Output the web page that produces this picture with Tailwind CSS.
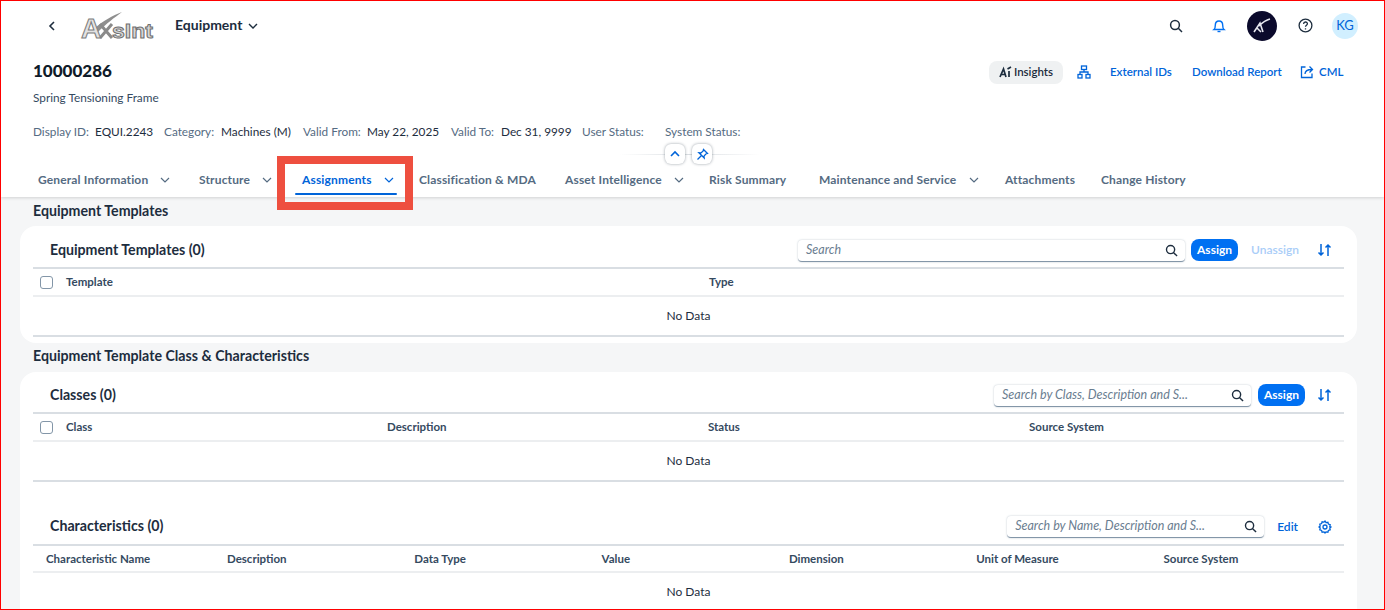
<!DOCTYPE html>
<html lang="en">
<head>
  <meta charset="UTF-8">
  <title>Equipment</title>
  <script src="https://cdn.jsdelivr.net/npm/@tailwindcss/browser@4"></script>
</head>
<body class="bg-[#f5f6f7] font-['Lato',sans-serif] text-[#1d2d3e]">
  <div class="relative w-[1385px] h-[610px] overflow-hidden border border-[#ff0000]">

    <!-- Header -->
    <header class="bg-white h-[196px] shadow-[0_1px_3px_rgba(0,0,0,0.15)] flex flex-col relative">
      <div class="h-[49px] flex items-center pl-[46px] pr-[26px]">
        <svg class="w-[10px] h-[12px] mt-px" viewBox="0 0 10 12" fill="none" stroke="#1d2d3e" stroke-width="1.6"><path d="M7 2 3 6l4 4"/></svg>
        <svg class="ml-[23px] w-[74px] h-[30px] overflow-visible" viewBox="0 0 74 30">
          <path d="M14 18C24 9 32 5 42 1 34 7 27 12 18 21" fill="#8f8f8f"/>
          <path d="M20 13 32 27M32 13 20 27" fill="none" stroke="#8a8a8a" stroke-width="3"/>
          <text x="1" y="27" font-family="Liberation Sans" font-weight="700" font-size="28" fill="#e2e2e2" stroke="#7c7c7c" stroke-width="1">A</text>
          <text x="32" y="27" font-family="Liberation Sans" font-weight="700" font-size="21" textLength="41" lengthAdjust="spacingAndGlyphs" fill="#d6d6d6" stroke="#707070" stroke-width="1">sInt</text>
        </svg>
        <span class="ml-[21px] mt-[-2px] text-[14px] font-bold">Equipment</span>
        <svg class="ml-[5px] w-[12px] h-[12px]" viewBox="0 0 12 12" fill="none" stroke="#1d2d3e" stroke-width="1.4"><path d="M2 4l4 4 4-4"/></svg>
        <div class="ml-auto flex items-center">
          <svg class="w-[14px] h-[14px]" viewBox="0 0 14 14" fill="none" stroke="#1d2d3e" stroke-width="1.5"><circle cx="6" cy="6" r="4.4"/><path d="M9.300 9.300 13 13"/></svg>
          <svg class="ml-[29px] w-[14px] h-[14px]" viewBox="0 0 14 14" fill="none" stroke="#0070f2" stroke-width="1.4"><path d="M2 10.500c1.200-1 1.300-2 1.300-4.200C3.300 3.500 5 2 7 2s3.700 1.500 3.700 4.300c0 2.200.1 3.200 1.300 4.200z"/><path d="M5.500 12.500h3"/></svg>
          <div class="ml-[21px] w-[30px] h-[30px] rounded-full bg-[#0b0a2c] flex items-center justify-center">
            <svg class="w-[20px] h-[18px]" viewBox="0 0 20 18" fill="none" stroke="#e8e8f0" stroke-width="1.600"><path d="M2 15 8 6l3 9M5 11l4 4M7 9c3-3 7-6 11-7"/></svg>
          </div>
          <svg class="ml-[21px] w-[15px] h-[15px]" viewBox="0 0 15 15" fill="none" stroke="#1d2d3e" stroke-width="1.300"><circle cx="7.500" cy="7.500" r="6.400"/><path d="M5.600 5.900c0-2.500 3.800-2.500 3.800-.2 0 1.600-1.900 1.500-1.900 3.100"/><path d="M7.500 10.300v1.200"/></svg>
          <div class="ml-[19px] w-[26px] h-[26px] rounded-full bg-[#d1efff] text-[#0064d9] text-[13px] flex items-center justify-center">KG</div>
        </div>
      </div>

      <div class="flex items-center h-[44px] pl-[32px] pr-[41px]">
        <h1 class="text-[17px] mt-[-3px] leading-none font-black text-[#0f1b29]">10000286</h1>
        <div class="ml-auto flex items-center whitespace-nowrap text-[11.500px] font-semibold text-[#0064d9]">
          <div class="w-[74px] h-[23px] rounded-lg bg-[#eff1f2] flex items-center justify-center gap-[2px] text-[#1d2d3e]">
            <svg class="w-[13px] h-[12px]" viewBox="0 0 13 12" fill="none" stroke="#1d2d3e" stroke-width="1.700"><path d="M1 11 4.500 3 7 11M2.500 8.500h3.500M10 11V5M8.500 3 12 1"/></svg>
            <span>Insights</span>
          </div>
          <svg class="ml-[14px] w-[14px] h-[14px]" viewBox="0 0 14 14" fill="none" stroke="#0064d9" stroke-width="1.300"><rect x="4.500" y="1" width="5" height="3.500"/><rect x="1" y="9.500" width="4" height="3.500"/><rect x="9" y="9.500" width="4" height="3.500"/><path d="M7 4.500V7M3 9.500V7h8v2.500"/></svg>
          <span class="ml-[19px] w-[62px]">External IDs</span>
          <span class="ml-[20px] w-[89px]">Download Report</span>
          <svg class="ml-[19px] w-[14px] h-[14px]" viewBox="0 0 14 14" fill="none" stroke="#0064d9" stroke-width="1.300"><path d="M5.500 2H1.500v10.500h10.500V8.500"/><path d="M5 9c0-3 2-4.500 7-4.500M9.500 1.500l3 3-3 3"/></svg>
          <span class="ml-[5px] w-[24px]">CML</span>
        </div>
      </div>

      <p class="pl-[32px] mt-[-4px] text-[11.800px] leading-[16px] text-[#354a5f]">Spring Tensioning Frame</p>

      <div class="pl-[32px] mt-[18px] h-[16px] flex items-center whitespace-nowrap text-[11.800px] text-[#556b82]">
        <span class="w-[62px]">Display ID:</span><span class="w-[69px] text-[#1d2d3e]">EQUI.2243</span>
        <span class="w-[57px]">Category:</span><span class="w-[82px] text-[#1d2d3e]">Machines (M)</span>
        <span class="w-[64px]">Valid From:</span><span class="w-[84px] text-[#1d2d3e]">May 22, 2025</span>
        <span class="w-[50px]">Valid To:</span><span class="w-[81px] text-[#1d2d3e]">Dec 31, 9999</span>
        <span class="w-[83px]">User Status:</span>
        <span>System Status:</span>
      </div>

      <!-- Collapse and pin buttons -->
      <div class="absolute left-[619px] top-[143px] w-[140px] h-[20px] flex items-center justify-center gap-[7px] pr-[3px]">
        <div class="absolute left-0 right-0 top-[10px] h-px bg-gradient-to-r from-transparent via-[#d9dde1] to-transparent"></div>
        <div class="relative w-[20px] h-[20px] rounded-md bg-white shadow-[0_0_3px_rgba(29,45,62,0.45)] flex items-center justify-center">
          <svg class="w-[12px] h-[12px]" viewBox="0 0 12 12" fill="none" stroke="#0064d9" stroke-width="1.600"><path d="M2 8l4-4 4 4"/></svg>
        </div>
        <div class="relative w-[20px] h-[20px] rounded-md bg-white shadow-[0_0_3px_rgba(29,45,62,0.45)] flex items-center justify-center">
          <svg class="w-[13px] h-[13px]" viewBox="0 0 13 13" fill="none" stroke="#0064d9" stroke-width="1.300"><path d="M7.500 1.500 11.500 5.500 9.800 6 8 8.200 8.200 10 3 4.800 4.800 5 7 3.200z"/><path d="M5.500 7.500 1.500 11.500"/></svg>
        </div>
      </div>

      <!-- Tabs -->
      <nav class="mt-auto h-[34px] pl-[37px] flex items-center whitespace-nowrap text-[12px] font-bold tracking-[0.15px] text-[#556b82]">
        <span class="w-[110px]">General Information</span>
        <svg class="ml-[12px] w-[10px] h-[10px]" viewBox="0 0 10 10" fill="none" stroke="#556b82" stroke-width="1.200"><path d="M1 3l4 4 4-4"/></svg>
        <span class="ml-[29px] w-[51px]">Structure</span>
        <svg class="ml-[12px] w-[10px] h-[10px]" viewBox="0 0 10 10" fill="none" stroke="#556b82" stroke-width="1.200"><path d="M1 3l4 4 4-4"/></svg>
        <div class="relative ml-[30px] w-[75px] text-[#0064d9]">Assignments
          <div class="absolute left-[-7px] top-[22px] w-[102px] h-[2px] rounded bg-[#0064d9]"></div>
        </div>
        <svg class="ml-[7px] w-[10px] h-[10px]" viewBox="0 0 10 10" fill="none" stroke="#0064d9" stroke-width="1.200"><path d="M1 3l4 4 4-4"/></svg>
        <span class="ml-[25px] w-[115px]">Classification &amp; MDA</span>
        <span class="ml-[31px] w-[97px]">Asset Intelligence</span>
        <svg class="ml-[12px] w-[10px] h-[10px]" viewBox="0 0 10 10" fill="none" stroke="#556b82" stroke-width="1.200"><path d="M1 3l4 4 4-4"/></svg>
        <span class="ml-[25px] w-[79px]">Risk Summary</span>
        <span class="ml-[31px] w-[138px]">Maintenance and Service</span>
        <svg class="ml-[12px] w-[10px] h-[10px]" viewBox="0 0 10 10" fill="none" stroke="#556b82" stroke-width="1.200"><path d="M1 3l4 4 4-4"/></svg>
        <span class="ml-[26px] w-[68px]">Attachments</span>
        <span class="ml-[28px]">Change History</span>
      </nav>
    </header>

    <!-- Content -->
    <main class="pl-[19px] pr-[27px]">
      <h2 class="pl-[13px] h-[29px] pb-[2px] flex items-center text-[14.200px] font-bold">Equipment Templates</h2>
      <section class="bg-white rounded-2xl h-[117px] px-[13px]">
        <div class="h-[43px] pt-[7px] flex items-center border-b-2 border-[#d9dee3]">
          <h3 class="pl-[17px] mt-[-1px] text-[14.200px] font-bold">Equipment Templates (0)</h3>
          <div class="ml-auto mt-[1px] w-[387px] h-[22px] rounded-[4px] bg-white shadow-[0_0_2px_rgba(85,107,130,0.4)] border-b border-[#8396a8] pl-[8px] pr-[7px] flex items-center justify-between text-[12.500px] italic text-[#6a7d90]">
            <span>Search</span>
            <svg class="w-[13px] h-[13px]" viewBox="0 0 14 14" fill="none" stroke="#1d2d3e" stroke-width="1.500"><circle cx="6" cy="6" r="4.400"/><path d="M9.300 9.300 13 13"/></svg>
          </div>
          <button class="ml-[6px] w-[47px] h-[22px] rounded-lg bg-[#0070f2] text-white text-[12px] font-bold">Assign</button>
          <span class="ml-[13px] text-[12px] font-semibold text-[#a9cdf8]">Unassign</span>
          <svg class="ml-[18px] mr-[12px] w-[15px] h-[14px]" viewBox="0 0 15 14" fill="none" stroke="#0064d9" stroke-width="1.500"><path d="M4 1v11M1.500 9.500 4 12l2.500-2.500M11 13V2M8.500 4.500 11 2l2.500 2.500"/></svg>
        </div>
        <div class="h-[28px] flex items-center border-b-2 border-[#eceef0] text-[11.500px] font-bold text-[#354a5f]">
          <div class="ml-[7px] w-[13px] h-[13px] shrink-0 rounded-[3px] border border-[#8396a8]"></div>
          <span class="ml-[13px] w-[643px]">Template</span>
          <span>Type</span>
        </div>
        <div class="h-[40px] flex items-center justify-center border-b-2 border-[#d9dee3] text-[12px]">No Data</div>
      </section>

      <h2 class="pl-[13px] h-[29px] mt-[-1px] pb-[1px] flex items-center whitespace-nowrap text-[14.200px] font-bold">Equipment Template Class &amp; Characteristics</h2>
      <section class="bg-white rounded-t-2xl h-[301px] mt-[1px] px-[13px]">
        <div class="h-[42px] pt-[6px] flex items-center border-b-2 border-[#d9dee3]">
          <h3 class="pl-[17px] mt-[-1px] text-[14.200px] font-bold">Classes (0)</h3>
          <div class="ml-auto mt-[1px] w-[257px] h-[22px] rounded-[4px] bg-white shadow-[0_0_2px_rgba(85,107,130,0.4)] border-b border-[#8396a8] pl-[8px] pr-[7px] flex items-center justify-between whitespace-nowrap text-[12.500px] italic text-[#6a7d90]">
            <span>Search by Class, Description and S...</span>
            <svg class="w-[13px] h-[13px]" viewBox="0 0 14 14" fill="none" stroke="#1d2d3e" stroke-width="1.500"><circle cx="6" cy="6" r="4.400"/><path d="M9.300 9.300 13 13"/></svg>
          </div>
          <button class="ml-[7px] w-[47px] h-[22px] rounded-lg bg-[#0070f2] text-white text-[12px] font-bold">Assign</button>
          <svg class="ml-[12px] mr-[12px] w-[15px] h-[14px]" viewBox="0 0 15 14" fill="none" stroke="#0064d9" stroke-width="1.500"><path d="M4 1v11M1.500 9.500 4 12l2.500-2.500M11 13V2M8.500 4.500 11 2l2.500 2.500"/></svg>
        </div>
        <div class="h-[28px] flex items-center border-b-2 border-[#eceef0] text-[11.500px] font-bold text-[#354a5f]">
          <div class="ml-[7px] w-[13px] h-[13px] shrink-0 rounded-[3px] border border-[#8396a8]"></div>
          <div class="ml-[13px] flex-1 grid grid-cols-[321px_321px_321px_1fr]">
            <span>Class</span><span>Description</span><span>Status</span><span>Source System</span>
          </div>
        </div>
        <div class="h-[40px] flex items-center justify-center border-b-2 border-[#d9dee3] text-[12px]">No Data</div>

        <div class="mt-[24px] h-[40px] pt-[4px] flex items-center border-b-2 border-[#d9dee3]">
          <h3 class="pl-[17px] mt-[-2px] text-[14.200px] font-bold">Characteristics (0)</h3>
          <div class="ml-auto w-[257px] h-[22px] rounded-[4px] bg-white shadow-[0_0_2px_rgba(85,107,130,0.4)] border-b border-[#8396a8] pl-[8px] pr-[7px] flex items-center justify-between whitespace-nowrap text-[12.500px] italic text-[#6a7d90]">
            <span>Search by Name, Description and S...</span>
            <svg class="w-[13px] h-[13px]" viewBox="0 0 14 14" fill="none" stroke="#1d2d3e" stroke-width="1.500"><circle cx="6" cy="6" r="4.400"/><path d="M9.300 9.300 13 13"/></svg>
          </div>
          <span class="ml-[13px] text-[12px] font-semibold text-[#0064d9]">Edit</span>
          <svg class="ml-[20px] mr-[12px] w-[14px] h-[14px]" viewBox="0 0 14 14" fill="none" stroke="#0064d9" stroke-width="1.300"><path d="M7 1l1 1.600 1.900-.3.500 1.800 1.800.6-.4 1.800L13 7l-1.200 1 .4 1.800-1.800.6-.5 1.800-1.900-.3L7 13l-1-1.100-1.900.3-.5-1.800-1.800-.6.400-1.800L1 7l1.200-1-.4-1.800 1.800-.6.500-1.800 1.900.3z"/><circle cx="7" cy="7" r="2"/></svg>
        </div>
        <div class="h-[27px] pl-[13px] grid grid-cols-[181px_repeat(6,187.300px)] items-center border-b-2 border-[#eceef0] text-[11.500px] font-bold text-[#354a5f]">
          <span>Characteristic Name</span><span>Description</span><span>Data Type</span><span>Value</span><span>Dimension</span><span>Unit of Measure</span><span>Source System</span>
        </div>
        <div class="h-[38px] flex items-center justify-center text-[12px]">No Data</div>
      </section>
    </main>

    <!-- Red highlight annotation -->
    <div class="absolute left-[276px] top-[155px] w-[136px] h-[54px] border-[8px] border-[#ee4f3f]"></div>
  </div>
</body>
</html>
